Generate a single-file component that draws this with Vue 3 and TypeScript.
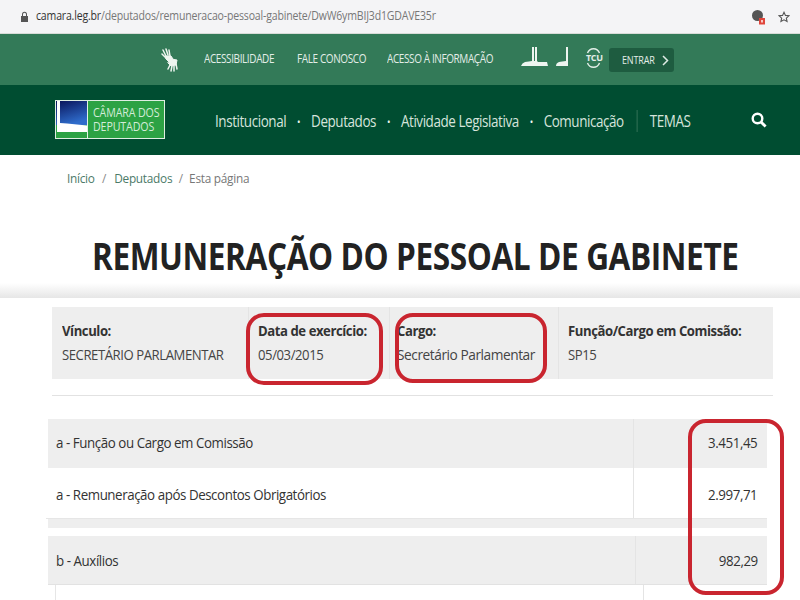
<script setup lang="ts">
const info = [
  { label: 'Vínculo:', value: 'SECRETÁRIO PARLAMENTAR', w: 197, sx: 0.875, pad: 10 },
  { label: 'Data de exercício:', value: '05/03/2015', w: 141, sx: 0.875, pad: 9 },
  { label: 'Cargo:', value: 'Secretário Parlamentar', w: 169, sx: 0.914, pad: 7 },
  { label: 'Função/Cargo em Comissão:', value: 'SP15', w: 214, sx: 0.875, pad: 9 },
]
</script>

<template>
  <div class="page">
    <header class="browser">
      <svg class="lock" width="9" height="11" viewBox="0 0 9 11"><path d="M2 5V3.2a2.5 2.5 0 0 1 5 0V5h1v6H1V5zm1 0h3V3.2a1.5 1.5 0 0 0-3 0z" fill="#555"/></svg>
      <span class="url"><b>camara.leg.br</b>/deputados/remuneracao-pessoal-gabinete/DwW6ymBIJ3d1GDAVE35r</span>
      <svg class="globe" width="13" height="16" viewBox="0 0 13 16"><circle cx="5.5" cy="6.5" r="5.5" fill="#555"/><rect x="7" y="9" width="6" height="6.5" fill="#e0463c"/><rect x="9" y="11" width="2" height="2.5" fill="#f7c9c5"/></svg>
      <svg class="star" width="12" height="12" viewBox="0 0 24 24"><path d="M12 2.5l2.9 6.3 6.9.8-5.1 4.7 1.4 6.8-6.1-3.4-6.1 3.4 1.4-6.8-5.1-4.7 6.9-.8z" fill="none" stroke="#555" stroke-width="2.2"/></svg>
    </header>
    <div class="top">
      <svg class="hands" width="18" height="25" viewBox="0 0 18 25" fill="none" stroke="#eef5f0" stroke-linecap="round">
        <path d="M2 2l3 6M5 1l2 6M8 2l1 6M1 6l4 4" stroke-width="1.5"/>
        <path d="M5 8h5l2 3-3 4-4-4z" fill="#eef5f0" stroke-width="1"/>
        <path d="M10 11l6 1-1 5-5 1-3-3z" fill="#eef5f0" stroke-width="1"/>
        <path d="M9 17l-2 4M11 18l-1 5M13 18l0 5M15 16l1 5" stroke-width="1.5"/>
      </svg>
      <a class="lnk t1">ACESSIBILIDADE</a>
      <a class="lnk t2">FALE CONOSCO</a>
      <a class="lnk t3">ACESSO À INFORMAÇÃO</a>
      <svg class="cong" width="27" height="19" viewBox="0 0 27 19"><path d="M0 19q1-3 4-4 4-.5 7-1V0h2v14h1V0h2v14l1 1h9l1 4z" fill="#eef5f0"/></svg>
      <svg class="sen" width="14" height="19" viewBox="0 0 14 19"><path d="M0 19q0-3 3-4 3-.5 7-1V0h2v19z" fill="#eef5f0"/></svg>
      <svg class="tcu" width="15" height="24" viewBox="0 0 15 24" fill="none" stroke="#e3eee8" stroke-width="1.4">
        <path d="M1.5 7A6.5 7 0 0 1 13.5 7"/>
        <path d="M1.5 17A6.5 7 0 0 0 13.5 17"/>
      </svg>
      <span class="tcutext">TCU</span>
      <button class="enter"><span>ENTRAR</span><svg width="7" height="11" viewBox="0 0 7 11"><path d="M1 1l4.5 4.5L1 10" fill="none" stroke="#dfeae4" stroke-width="1.5"/></svg></button>
    </div>
    <nav class="main">
      <div class="logo">
        <svg class="mark" width="31" height="37" viewBox="0 0 31 37">
          <defs><linearGradient id="sky" x1="0" y1="0" x2="0.4" y2="1"><stop offset="0" stop-color="#081258"/><stop offset="1" stop-color="#2f6ccb"/></linearGradient></defs>
          <rect width="31" height="37" fill="#2ca244"/>
          <rect width="31" height="24" fill="url(#sky)"/>
          <path d="M1 0h3v22l7 .5 20 2V31H1z" fill="#fff"/>
        </svg>
        <span class="logotext">CÂMARA DOS<br>DEPUTADOS</span>
      </div>
      <div class="menu">
        <a>Institucional</a><i>•</i><a>Deputados</a><i>•</i><a>Atividade Legislativa</a><i>•</i><a>Comunicação</a><em></em><a>TEMAS</a>
      </div>
      <svg class="search" width="16" height="16" viewBox="0 0 16 16"><circle cx="6.5" cy="6.5" r="4.8" fill="none" stroke="#fff" stroke-width="2.4"/><path d="M10 10l4.6 4.6" stroke="#fff" stroke-width="2.8"/></svg>
    </nav>
    <div class="crumb"><a>Início</a><s>/</s><a>Deputados</a><s class="s2">/</s><span>Esta página</span></div>
    <h1>REMUNERAÇÃO DO PESSOAL DE GABINETE</h1>
    <div class="band"></div>
    <section class="info">
      <div v-for="c in info" :key="c.label" class="cell" :style="{ width: c.w + 'px', paddingLeft: c.pad + 'px' }">
        <b>{{ c.label }}</b>
        <span :style="{ transform: `scaleX(${c.sx})` }">{{ c.value }}</span>
      </div>
    </section>
    <hr />
    <section class="rows">
      <div class="row grey r1"><span class="lbl">a - Função ou Cargo em Comissão</span><span class="num">3.451,45</span></div>
      <div class="row white r2"><span class="lbl">a - Remuneração após Descontos Obrigatórios</span><span class="num">2.997,71</span></div>
      <div class="strip"></div>
      <div class="row grey r3"><span class="lbl">b - Auxílios</span><span class="num">982,29</span></div>
      <div class="row white r4"></div>
    </section>
    <div class="mk m1"></div>
    <div class="mk m2"></div>
    <div class="mk m3"></div>
  </div>
</template>

<style>
html, body { margin: 0; background: #fff; }
</style>

<style scoped>
.page { position: relative; width: 800px; height: 600px; overflow: hidden; font-family: "Open Sans", sans-serif; color: #333; background: #fff; }
.browser { height: 34px; background: #f4f4f6; display: flex; align-items: center; padding-left: 20px; box-sizing: border-box; border-bottom: 1px solid #d8dcd8; }
.url { margin: -2px 0 0 7px; font-size: 12px; letter-spacing: -0.2px; color: #777; flex: 1; white-space: nowrap; transform: scaleX(0.878); transform-origin: left center; }
.url b { font-weight: 400; color: #333; }
.globe { margin-right: 13px; }
.star { margin-right: 10px; }
.top { height: 51px; background: #337a58; position: relative; color: #e3eee8; font-size: 12px; }
.lnk, .top > svg, .tcutext, .enter { position: absolute; white-space: nowrap; }
.lnk { top: 16px; letter-spacing: -0.45px; transform: scaleX(0.83); transform-origin: left center; }
.hands { left: 161px; top: 14px; }
.t1 { left: 204px; } .t2 { left: 297px; } .t3 { left: 387px; }
.cong { left: 521px; top: 13px; } .sen { left: 556px; top: 13px; }
.tcu { left: 586px; top: 12px; }
.tcutext { left: 586px; top: 18px; width: 15px; font-size: 9px; font-weight: 700; text-align: center; line-height: 12px; letter-spacing: -0.4px; }
.enter { left: 609px; top: 14px; width: 65px; height: 24px; background: #1e5c40; border: 0; border-radius: 3px; color: #e3eee8; font: 10.5px "Open Sans", sans-serif; padding: 0; }
.enter span { position: absolute; left: 13px; top: 5px; letter-spacing: -0.2px; transform: scaleX(0.86); transform-origin: left center; }
.enter svg { position: absolute; left: 53px; top: 7px; }
.main { height: 70px; background: #004d31; display: flex; align-items: center; position: relative; }
.logo { margin: -1px 0 0 55px; width: 110px; height: 39px; border: 1px solid #dfeee2; box-sizing: border-box; display: flex; background: #2ca244; }
.mark { flex: none; border-right: 1px solid #e4f1e6; }
.logotext { flex: none; width: 66px; color: #d3ecd8; font-size: 13px; line-height: 14px; margin: 4px 0 0 5px; white-space: nowrap; letter-spacing: -0.15px; transform: scaleX(0.82); transform-origin: left center; }
.menu { position: absolute; left: 215px; top: 25px; display: flex; align-items: center; font-size: 16px; letter-spacing: -0.5px; color: #d6e4dc; white-space: nowrap; transform: scaleX(0.84); transform-origin: left center; }
.menu i { font-style: normal; font-size: 11px; margin: 0 13px; color: #eef5f0; }
.menu em { width: 1px; height: 22px; background: #3d7a5e; margin: 0 15px; }
.search { position: absolute; left: 751px; top: 27px; }
.crumb { height: 46px; padding: 14px 0 0 67px; box-sizing: border-box; font-size: 13px; letter-spacing: -0.3px; color: #4c7a68; display: flex; transform: scaleX(0.91); transform-origin: 67px center; }
.crumb s { text-decoration: none; color: #888; margin: 0 9px 0 8px; }
.crumb .s2 { margin: 0 7px; }
.crumb span { color: #777; }
h1 { margin: 0; position: absolute; left: 92px; top: 230px; font-size: 38px; line-height: 50px; font-weight: 700; color: #222; letter-spacing: -0.5px; white-space: nowrap; transform: scaleX(0.8315); transform-origin: left center; }
.band { position: absolute; left: 0; top: 283px; width: 800px; height: 15px; background: linear-gradient(#fff, #e6e6e6); }
.info { position: absolute; left: 52px; top: 307px; display: flex; height: 72px; background: #eee; width: 721px; }
.cell { box-sizing: border-box; padding: 11px 10px; display: flex; flex-direction: column; align-items: flex-start; border-right: 1px solid #e4e4e4; white-space: nowrap; font-size: 15px; letter-spacing: -0.5px; }
.cell:last-child { border-right: 0; }
.cell b { font-weight: 700; color: #333; line-height: 24px; transform: scaleX(0.875); transform-origin: left center; }
.cell span { line-height: 24px; color: #444; transform-origin: left center; }
hr { position: absolute; left: 52px; top: 395px; width: 721px; margin: 0; border: 0; border-top: 1px solid #e2e2e2; }
.rows { position: absolute; left: 48px; top: 419px; width: 719px; }
.row { display: flex; justify-content: space-between; align-items: center; font-size: 15px; letter-spacing: -0.5px; padding: 0 10px 0 8px; box-sizing: border-box; position: relative; color: #333; }
.lbl { transform: scaleX(0.89); transform-origin: left center; }
.num { transform: scaleX(0.89); transform-origin: right center; }
.row::after { content: ""; position: absolute; left: 585px; top: 0; bottom: 0; width: 1px; background: #e4e4e4; }
.grey { background: #eee; }
.white { background: #fff; }
.r1 { height: 49px; padding-bottom: 3px; }
.r2 { height: 51px; border-bottom: 1px solid #e6e6e6; margin-left: -2px; padding-left: 10px; padding-top: 2px; }
.r2::after { left: 587px; }
.strip { height: 17px; background: linear-gradient(#eee 53%, #fff 53%); }
.r3 { height: 49px; border-bottom: 1px solid #e2e2e2; padding-bottom: 1px; padding-right: 9px; }
.r3::after { left: 587px; }
.r4 { height: 20px; border-left: 1px solid #e6e6e6; margin-left: 7px; }
.r4::after { left: 587px; }
.mk { position: absolute; border: 4px solid #c9252f; box-sizing: border-box; }
.m1 { left: 246px; top: 313px; width: 137px; height: 72px; border-radius: 18px; }
.m2 { left: 395px; top: 313px; width: 152px; height: 70px; border-radius: 18px; }
.m3 { left: 688px; top: 419px; width: 96px; height: 176px; border-radius: 18px; }
</style>
